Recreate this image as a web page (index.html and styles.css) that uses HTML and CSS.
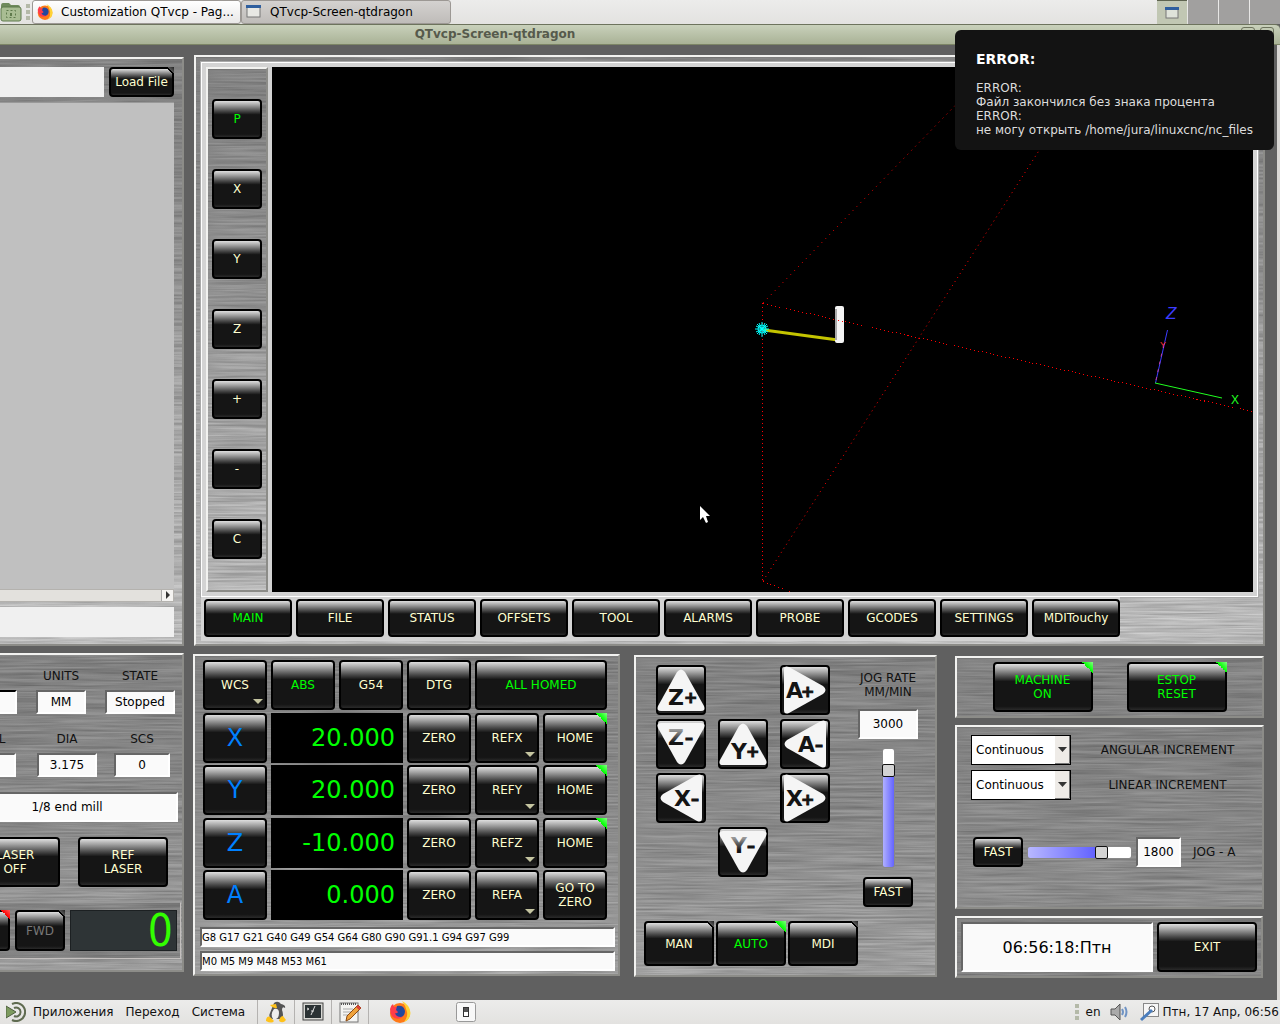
FILE: index.html
```html
<!DOCTYPE html>
<html lang="ru">
<head>
    <meta charset="UTF-8">
    <meta name="viewport" content="width=device-width, initial-scale=1.0">
    <title>QTvcp-Screen-qtdragon</title>
    <link rel="stylesheet" href="styles.css">
</head>
<body>
    <header class="desk-bar top-bar">
        <svg class="folder" width="22" height="24" viewBox="0 0 22 24">
            <path d="M1 6q0-3 2-3h6l2 2h7q2 0 2 2v2H1z" fill="#6f8a5c"/>
            <rect x="1" y="7" width="20" height="14" rx="2" fill="#a9bd93" stroke="#5f7a4c"/>
            <rect x="6.500" y="10.500" width="9" height="7" fill="none" stroke="#5f7a4c" stroke-dasharray="2 2"/>
            <rect x="10" y="13" width="2" height="3" fill="#5f7a4c"/>
        </svg>
        <span class="handle"></span>
        <button class="task task-light">
            <svg width="16" height="16" viewBox="0 0 22 22"><use href="#firefox"/></svg>
            Customization QTvcp - Pag...
        </button>
        <button class="task task-active">
            <svg width="16" height="14" viewBox="0 0 16 14">
                <rect x="1" y="1" width="13" height="11" fill="#e8e8e4" stroke="#777"/>
                <rect x="0" y="0" width="15" height="3" fill="#2f5f9e"/>
            </svg>
            QTvcp-Screen-qtdragon
        </button>
        <div class="pager">
            <span class="desk current">
                <svg width="14" height="12" viewBox="0 0 14 12">
                    <rect x="1" y="1" width="12" height="10" fill="#dfe3da" stroke="#777"/>
                    <rect x="0" y="0" width="14" height="3" fill="#2f5f9e"/>
                </svg>
            </span>
            <span class="desk"></span>
            <span class="desk"></span>
            <span class="desk"></span>
        </div>
    </header>

    <div class="title-bar">QTvcp-Screen-qtdragon
        <span class="win-buttons"><i></i><i></i></span>
    </div>

    <main class="window">
        <div class="row upper">
            <div class="clip">
                <section class="panel file-panel">
                    <div class="file-row">
                        <input type="text" class="flat" aria-label="File path">
                        <button class="btn load led">Load File</button>
                    </div>
                    <div class="file-list">
                        <div class="scroll"><button class="scroll-btn" aria-label="Scroll right"></button></div>
                    </div>
                    <input type="text" class="flat" aria-label="MDI line">
                </section>
            </div>

            <section class="panel view-panel">
                <div class="view-frame">
                    <div class="panel view-keys">
                        <button class="btn on">P</button>
                        <button class="btn">X</button>
                        <button class="btn">Y</button>
                        <button class="btn">Z</button>
                        <button class="btn">+</button>
                        <button class="btn">-</button>
                        <button class="btn">C</button>
                    </div>
                    <svg class="plot" viewBox="272 67 981 525" preserveAspectRatio="xMinYMin slice">
                        <!-- machine limits -->
                        <g class="limits">
                            <path d="M762.500 303V581"/>
                            <path d="M763 303.500L1252 411.500"/>
                            <path class="slope" d="M763 303L980 80" stroke-dasharray="1 4.600"/>
                            <path class="slope" d="M763 581L1058 121" stroke-dasharray="1 3.800"/>
                            <path d="M763 581.500L790 591.500"/>
                        </g>
                        <!-- tool path -->
                        <path d="M764 330L838 340" stroke="#c4c400" stroke-width="3"/>
                        <rect x="835" y="306" width="9" height="37" rx="2" fill="#f4f4f4"/>
                        <rect x="835" y="309" width="2" height="31" fill="#aaa"/>
                        <rect x="838" y="320" width="1" height="1" fill="#f00"/>
                        <rect x="842" y="321" width="1" height="1" fill="#f00"/>
                        <!-- origin -->
                        <g stroke="#00ffff" fill="none">
                            <path d="M762 322V337M755 329H769M757 324L767 334M767 324L757 334M759 323L765 335M765 323L759 335M756 326L768 332M768 326L756 332"/>
                            <circle cx="762" cy="329" r="4"/>
                        </g>
                        <!-- axes -->
                        <g fill="none">
                            <path d="M1155.500 383L1167.500 330" stroke="#3c3cff"/>
                            <path d="M1156 380L1162.500 350" stroke="#c040a0" stroke-dasharray="3 5"/>
                            <path d="M1155 383L1222 398" stroke="#20ff20"/>
                        </g>
                        <text x="1166" y="319" class="axis-z">Z</text>
                        <text x="1160" y="348" class="axis-y">Y</text>
                        <text x="1231" y="404" class="axis-x">X</text>
                        <path d="M700 506v14l3-3 3 6 2-1-2-6h4z" fill="#fff"/>
                    </svg>
                </div>
                <nav class="tabs">
                    <button class="btn on">MAIN</button>
                    <button class="btn">FILE</button>
                    <button class="btn">STATUS</button>
                    <button class="btn">OFFSETS</button>
                    <button class="btn">TOOL</button>
                    <button class="btn">ALARMS</button>
                    <button class="btn">PROBE</button>
                    <button class="btn">GCODES</button>
                    <button class="btn">SETTINGS</button>
                    <button class="btn">MDITouchy</button>
                </nav>
            </section>
        </div>

        <div class="row lower">
            <div class="clip">
                <section class="panel status-panel">
                    <div class="fields first">
                        <input type="text" class="field dark-top" aria-label="Gcode">
                        <label class="w-units">UNITS<input type="text" class="field" value="MM"></label>
                        <label class="w-state">STATE<input type="text" class="field" value="Stopped"></label>
                    </div>
                    <div class="fields second">
                        <label class="w-tool">TOOL<input type="text" class="field"></label>
                        <label class="w-dia">DIA<input type="text" class="field" value="3.175"></label>
                        <label class="w-scs">SCS<input type="text" class="field" value="0"></label>
                    </div>
                    <input type="text" class="field tool-name" value="1/8 end mill" aria-label="Tool">
                    <div class="laser">
                        <button class="btn">LASER<br>OFF</button>
                        <button class="btn">REF<br>LASER</button>
                    </div>
                    <div class="panel spindle">
                        <button class="btn led led-red" aria-label="Stop"></button>
                        <button class="btn led dim">FWD</button>
                        <output class="lcd">0</output>
                    </div>
                </section>
            </div>

            <section class="panel dro-panel">
                <div class="dro">
                    <button class="btn menu">WCS</button>
                    <button class="btn on">ABS</button>
                    <button class="btn">G54</button>
                    <button class="btn">DTG</button>
                    <button class="btn on wide">ALL HOMED</button>

                    <button class="btn axis">X</button>
                    <output class="readout">20.000</output>
                    <button class="btn">ZERO</button>
                    <button class="btn menu">REFX</button>
                    <button class="btn led led-green">HOME</button>

                    <button class="btn axis">Y</button>
                    <output class="readout">20.000</output>
                    <button class="btn">ZERO</button>
                    <button class="btn menu">REFY</button>
                    <button class="btn led led-green">HOME</button>

                    <button class="btn axis">Z</button>
                    <output class="readout">-10.000</output>
                    <button class="btn">ZERO</button>
                    <button class="btn menu">REFZ</button>
                    <button class="btn led led-green">HOME</button>

                    <button class="btn axis">A</button>
                    <output class="readout">0.000</output>
                    <button class="btn">ZERO</button>
                    <button class="btn menu">REFA</button>
                    <button class="btn">GO TO<br>ZERO</button>
                </div>
                <input type="text" class="field codes" value="G8 G17 G21 G40 G49 G54 G64 G80 G90 G91.1 G94 G97 G99" aria-label="G codes">
                <input type="text" class="field codes" value="M0 M5 M9 M48 M53 M61" aria-label="M codes">
            </section>

            <section class="panel jog-panel">
                <div class="jog-top">
                    <div class="jog-pad">
                        <button class="btn c1 r1"><svg viewBox="0 0 50 50"><use href="#up"/><text x="12" y="40">Z</text><text x="28" y="38" class="sign">+</text></svg></button>
                        <button class="btn c3 r1"><svg viewBox="0 0 50 50"><use href="#right"/><text x="6" y="33">A</text><text x="21" y="32" class="sign">+</text></svg></button>
                        <button class="btn c1 r2"><svg viewBox="0 0 50 50"><use href="#down"/><text x="12" y="26" class="fade">Z</text><text x="29" y="24" class="sign">–</text></svg></button>
                        <button class="btn c2 r2"><svg viewBox="0 0 50 50"><use href="#up"/><text x="13" y="40">Y</text><text x="28" y="38" class="sign">+</text></svg></button>
                        <button class="btn c3 r2"><svg viewBox="0 0 50 50"><use href="#left"/><text x="18" y="33">A</text><text x="35" y="31" class="sign">–</text></svg></button>
                        <button class="btn c1 r3"><svg viewBox="0 0 50 50"><use href="#left"/><text x="18" y="33">X</text><text x="35" y="31" class="sign">–</text></svg></button>
                        <button class="btn c3 r3"><svg viewBox="0 0 50 50"><use href="#right"/><text x="6" y="33">X</text><text x="21" y="32" class="sign">+</text></svg></button>
                        <button class="btn c2 r4"><svg viewBox="0 0 50 50"><use href="#down"/><text x="13" y="26" class="fade">Y</text><text x="29" y="24" class="sign">–</text></svg></button>
                    </div>
                    <div class="jog-rate">
                        <label for="jogRate">JOG RATE<br>MM/MIN</label>
                        <input type="text" id="jogRate" class="field" value="3000">
                        <input type="range" class="vertical" value="86" aria-label="Jog rate">
                        <button class="btn">FAST</button>
                    </div>
                </div>
                <div class="modes">
                    <button class="btn led">MAN</button>
                    <button class="btn led led-green on">AUTO</button>
                    <button class="btn led">MDI</button>
                </div>
            </section>

            <div class="right-column">
                <section class="panel power">
                    <button class="btn led led-green on">MACHINE<br>ON</button>
                    <button class="btn led led-green on">ESTOP<br>RESET</button>
                </section>
                <section class="panel increments">
                    <div class="inc">
                        <select id="angular"><option>Continuous</option></select>
                        <label for="angular">ANGULAR INCREMENT</label>
                    </div>
                    <div class="inc">
                        <select id="linear"><option>Continuous</option></select>
                        <label for="linear">LINEAR INCREMENT</label>
                    </div>
                    <div class="jog-a">
                        <button class="btn">FAST</button>
                        <input type="range" class="horizontal" value="74" aria-label="Jog A rate">
                        <input type="text" id="jogA" class="field" value="1800">
                        <label for="jogA">JOG - A</label>
                    </div>
                </section>
                <section class="panel exit-panel">
                    <input type="text" class="field clock" value="06:56:18:Птн" aria-label="Clock">
                    <button class="btn">EXIT</button>
                </section>
            </div>
        </div>
    </main>

    <footer class="desk-bar bottom-bar">
        <svg class="mate" width="20" height="20" viewBox="0 0 20 20" fill="none">
            <path d="M6 2A9 9 0 1 1 6 18" stroke="#5f6b50" stroke-width="2"/>
            <path d="M8 6a4.500 4.500 0 1 1 0 8" stroke="#5f6b50" stroke-width="2"/>
            <path d="M0 4l10 6-10 6z" fill="#7d9b5f" stroke="#4f6040"/>
        </svg>
        <a href="#">Приложения</a>
        <a href="#">Переход</a>
        <a href="#">Система</a>
        <div class="launchers">
            <span>
                <svg width="22" height="22" viewBox="0 0 22 22">
                    <path d="M9 2q4-3 7 1 5 1 4 4-3-2-3 2 2 5 0 9H7q-4-2-2-6 2-5 4-10z" fill="#555"/>
                    <path d="M9 8q5-1 5 4 0 5-3 6H8q-3-5 1-10z" fill="#eee"/>
                    <path d="M5 4l6-1 1 4q-4 1-7-3zM1 19q1-5 4-3l4 4q-2 3-8 0zM14 20q1-5 4-5l3 4q-3 4-7 1z" fill="#ffc21a"/>
                </svg>
            </span>
            <span>
                <svg width="22" height="20" viewBox="0 0 22 20">
                    <rect x="1" y="1" width="20" height="17" fill="#d8d8d4" stroke="#444"/>
                    <rect x="3" y="3" width="16" height="13" fill="#2b3234"/>
                    <path d="M5 6l2 1-2 1M9 9h3M13 4l-4 9" stroke="#ddd" fill="none"/>
                </svg>
            </span>
            <span>
                <svg width="22" height="22" viewBox="0 0 22 22">
                    <rect x="1" y="2" width="18" height="19" fill="#f4f4f2" stroke="#777"/>
                    <path d="M2 3h16" stroke="#555" stroke-width="2" stroke-dasharray="1 1"/>
                    <path d="M4 8h10M4 11h8M4 14h6" stroke="#aaa"/>
                    <path d="M19 4l3 3L11 18l-4 2 1-5z" fill="#f0a33c" stroke="#8a4a14"/>
                    <path d="M19 4l3 3-2 2-3-3z" fill="#d9403a"/>
                </svg>
            </span>
        </div>
        <svg class="ff" width="22" height="22" viewBox="0 0 22 22">
            <g id="firefox">
                <circle cx="11" cy="12" r="10" fill="#ff7a18"/>
                <path d="M13 0q8 4 8.500 12-.5 7-6.500 9 4-5 3-10-1-6-5-11z" fill="#ffd335"/>
                <path d="M1 8Q2 4 4 3l1 3q6-1 8 3 4 5-1 8-6 2-9-2-2-3-2-7z" fill="#ff3d4a"/>
                <path d="M8 5q7-1 8 5 0 5-4 6-5 0-6-4 2 1 3-1L7 9z" fill="#24489e"/>
            </g>
        </svg>
        <svg class="toggle" width="20" height="20" viewBox="0 0 20 20">
            <rect x=".5" y=".5" width="19" height="19" rx="2" fill="#f8f8f8" stroke="#999"/>
            <rect x="7.500" y="5.500" width="5" height="9" fill="#fff" stroke="#333"/>
            <rect x="8" y="6" width="4" height="4" fill="#555"/>
        </svg>
        <div class="tray">
            <span class="handle"></span>
            <span class="lang">en</span>
            <svg width="20" height="20" viewBox="0 0 20 20" fill="none">
                <path d="M1 7h4l5-5v16l-5-5H1z" fill="#aaa" stroke="#555"/>
                <path d="M12 7q2 3 0 6M15 5q3 5 0 10" stroke="#6f93c4" stroke-width="2"/>
            </svg>
            <svg class="tray-note" width="19" height="20" viewBox="0 0 19 20">
                <rect x="3.500" y="1.500" width="15" height="13" fill="#f6f6f6" stroke="#888"/>
                <circle cx="12" cy="7" r="3" fill="#fff" stroke="#555"/>
                <path d="M12 8L1 18" stroke="#4a7dbd" stroke-width="3"/>
            </svg>
            <time>Птн, 17 Апр, 06:56</time>
        </div>
    </footer>

    <aside class="notice" role="alert">
        <h2>ERROR:</h2>
        <p>ERROR:<br>Файл закончился без знака процента<br>ERROR:<br>не могу открыть /home/jura/linuxcnc/nc_files</p>
    </aside>

    <!-- shared shapes for the jog arrows -->
    <svg class="defs" aria-hidden="true">
        <defs>
            <linearGradient id="fade" x1="0" y1="0" x2="0" y2="1">
                <stop offset=".2" stop-color="#999"/>
                <stop offset=".7" stop-color="#141414"/>
            </linearGradient>
            <path id="up" d="M21 7q4-5 8 0l19 34q2 5-3 5H5q-5 0-3-5z" fill="#f5f5f5"/>
            <path id="down" d="M21 43q4 5 8 0L48 9q2-5-3-5H5Q0 4 2 9z" fill="#f5f5f5"/>
            <path id="right" d="M43 21q5 4 0 8L9 48q-5 2-5-3V5q0-5 5-3z" fill="#f5f5f5"/>
            <path id="left" d="M7 21q-5 4 0 8l34 19q5 2 5-3V5q0-5-5-3z" fill="#f5f5f5"/>
        </defs>
    </svg>
</body>
</html>
```

FILE: styles.css
```css
* {
    box-sizing: border-box;
}

body {
    margin: 0;
    min-height: 100vh;
    display: flex;
    flex-direction: column;
    overflow: hidden;
    background-color: #606060;
    font-family: "DejaVu Sans", sans-serif;
    font-size: 12px;
    line-height: 14px;
    color: #111;
}

button,
input,
select {
    font: inherit;
    margin: 0;
}

.defs {
    position: absolute;
    width: 0;
    height: 0;
}

/* Desktop bars */
.desk-bar {
    display: flex;
    align-items: center;
    height: 24px;
    background: linear-gradient(#ececeb, #e3e2e0);
}

.handle {
    width: 4px;
    height: 16px;
    margin: 0 2px 0 4px;
    background: repeating-linear-gradient(#b4b9a8 0, #b4b9a8 4px, transparent 4px, transparent 6px);
}

.task {
    display: flex;
    align-items: center;
    gap: 8px;
    height: 24px;
    width: 209px;
    padding: 0 4px;
    border: 1px solid #9c9894;
    border-radius: 3px;
    background: linear-gradient(#fff, #e9e8e7);
    white-space: nowrap;
}

.task-active {
    width: 210px;
    background: linear-gradient(#d4d2d0, #bfbcb9);
}

.pager {
    display: flex;
    gap: 1px;
    height: 24px;
    margin-left: auto;
}

.desk {
    width: 30px;
    background-color: #a1a09f;
}

.desk.current {
    display: flex;
    align-items: center;
    justify-content: center;
    border-top: 1px solid #5e6450;
    background-color: #c1c7b3;
}

.title-bar {
    position: relative;
    height: 21px;
    padding-right: 290px;
    border-top: 1px solid #6d735d;
    border-bottom: 1px solid #7c8566;
    border-top-right-radius: 5px;
    background: linear-gradient(#c9d1bb, #a9b296);
    color: #565a4c;
    font-weight: bold;
    line-height: 19px;
    text-align: center;
}

.win-buttons {
    position: absolute;
    top: 2px;
    right: 6px;
    display: flex;
    gap: 5px;
}

.win-buttons i {
    width: 14px;
    height: 14px;
    border: 1px solid #6d735d;
    border-radius: 3px;
}

/* Window */
.window {
    flex: 1;
    display: flex;
    flex-direction: column;
    gap: 7px;
    padding: 10px 12px 22px 0;
    background-color: #606060;
    border-right: 3px solid #d9d7d4;
}

.row {
    display: flex;
}

.upper {
    flex: 1;
    gap: 10px;
}

.lower {
    align-items: flex-start;
    padding-right: 1px;
}

.clip {
    display: flex;
    flex: 0 0 184px;
    justify-content: flex-end;
    overflow: hidden;
}

.panel {
    border: 2px solid;
    border-color: #f2f2f0 #8c8c88 #8c8c88 #f2f2f0;
    background-image:
        url("data:image/svg+xml,%3Csvg xmlns='http://www.w3.org/2000/svg' width='512' height='600'%3E%3Cfilter id='n' x='0' y='0' width='100%25' height='100%25'%3E%3CfeTurbulence type='fractalNoise' baseFrequency='.012 .5' numOctaves='3' seed='4' stitchTiles='stitch'/%3E%3CfeColorMatrix values='0 0 0 0 0 0 0 0 0 0 0 0 0 0 0 .4 0 0 0 -.1'/%3E%3C/filter%3E%3Crect width='512' height='600' filter='url(%23n)'/%3E%3C/svg%3E"),
        linear-gradient(#8f8f8f, #9b9b9b 180px, #b0b0b0 320px, #d0d0d0 590px);
}

/* Buttons */
.btn {
    position: relative;
    padding: 0;
    border: 2px solid #000;
    border-radius: 4px;
    background: linear-gradient(#dedede, #a0a0a0 12%, #484848 28%, #151515 38%, #151515 92%, #2a2a2a);
    color: #ffffd0;
    text-align: center;
    cursor: pointer;
}

.btn.on {
    color: #00ff00;
}

.btn.dim {
    color: #777;
}

.btn.axis {
    color: #0080ff;
    font-size: 24px;
}

.menu::after {
    content: "";
    position: absolute;
    right: 2px;
    bottom: 4px;
    border: 5px solid transparent;
    border-top-color: #c4c4a0;
    border-bottom: 0;
}

.led::before {
    content: "";
    position: absolute;
    top: -2px;
    right: -2px;
    width: 8px;
    height: 8px;
    background: linear-gradient(to top right, transparent 48%, #000 50%, #000 60%, #555 62%, #222);
}

.led-green::before {
    width: 11px;
    height: 11px;
    background: linear-gradient(to top right, transparent 50%, #00ff00 50%, #80ff80);
}

.led-red::before {
    width: 9px;
    height: 9px;
    background: linear-gradient(to top right, transparent 50%, #ff0000 50%, #ff6060);
}

/* Text boxes */
.field {
    height: 24px;
    min-width: 0;
    padding: 0;
    border: 2px solid;
    border-color: #666 #fff #fff #666;
    border-radius: 0;
    background-color: #fafafa;
    color: #000;
    text-align: center;
}

.flat {
    display: block;
    width: 100%;
    height: 30px;
    border: 0;
    background-color: #f0f0f0;
}

/* File panel */
.file-panel {
    flex: 0 0 300px;
    display: flex;
    flex-direction: column;
    gap: 5px;
    margin-top: 2px;
    padding: 8px 8px 7px;
}

.file-row {
    display: flex;
    gap: 5px;
}

.load {
    flex: 0 0 65px;
}

.file-list {
    flex: 1;
    display: flex;
    align-items: flex-end;
    border-top: 1px solid #999;
    background-color: #c0c0c0;
}

.scroll {
    flex: 1;
    height: 13px;
    border: 1px solid #b4b2ae;
    background-color: #e3e1dd;
}

.scroll-btn {
    position: relative;
    display: block;
    width: 12px;
    height: 11px;
    margin-left: auto;
    padding: 0;
    border: 0;
    border-left: 1px solid #aaa;
    background-color: #f4f3f1;
}

.scroll-btn::after {
    content: "";
    position: absolute;
    top: 1px;
    left: 4px;
    border: 4px solid transparent;
    border-left-color: #333;
    border-right: 0;
}

/* Plot panel */
.view-panel {
    flex: 1;
    display: flex;
    flex-direction: column;
    min-width: 0;
    padding: 5px 5px 3px;
}

.view-frame {
    flex: 1;
    display: flex;
    gap: 4px;
    padding: 4px;
    border: 1px solid #fff;
    outline: 1px solid #aaa;
    background-color: #d3d3d3;
}

.view-keys {
    flex: 0 0 62px;
    display: flex;
    flex-direction: column;
    align-items: center;
    gap: 30px;
    padding-top: 30px;
}

.view-keys .btn {
    width: 50px;
    height: 40px;
}

.plot {
    flex: 1;
    min-width: 0;
    height: 525px;
    background-color: #000;
}

.limits {
    fill: none;
    stroke: #ff0000;
    stroke-dasharray: 1 3;
    shape-rendering: crispEdges;
}

.slope {
    shape-rendering: auto;
}

.axis-z {
    fill: #3c3cff;
    font: italic 17px "Liberation Sans", sans-serif;
}

.axis-y {
    fill: #ff3030;
    font: 9px "Liberation Sans", sans-serif;
}

.axis-x {
    fill: #20ff20;
    font: 12px "Liberation Sans", sans-serif;
}

.tabs {
    display: flex;
    align-self: flex-start;
    gap: 4px;
    padding: 2px 0 4px 3px;
    background-color: #d3d3d3;
}

.tabs .btn {
    width: 88px;
    height: 38px;
}

/* Status panel */
.status-panel {
    flex: 0 0 300px;
    height: 319px;
    padding: 14px 0 0;
}

.fields {
    display: flex;
    align-items: flex-end;
    justify-content: flex-end;
    margin-bottom: 15px;
}

.fields label {
    display: flex;
    flex-direction: column;
    align-items: center;
    gap: 7px;
}

.fields .field {
    width: 100%;
}

.first {
    gap: 19px;
    margin-bottom: 18px;
    padding-right: 7px;
}

.first .dark-top {
    width: 60px;
    border-top-color: #000;
}

.w-units {
    width: 50px;
}

.w-state {
    width: 70px;
}

.second {
    gap: 17px;
    padding-right: 12px;
}

.w-tool {
    width: 54px;
    margin-right: 4px;
}

.w-dia {
    width: 60px;
}

.w-scs {
    width: 56px;
}

.tool-name {
    display: block;
    width: 222px;
    height: 30px;
    margin: 0 4px 15px auto;
}

.laser {
    display: flex;
    justify-content: flex-end;
    gap: 18px;
    margin: 0 14px 15px 0;
}

.laser .btn {
    width: 90px;
    height: 50px;
}

.spindle {
    display: flex;
    justify-content: flex-end;
    gap: 5px;
    margin-right: 1px;
    padding: 7px 3px 7px;
    border-width: 1px;
    border-color: #999 #c4c0be #c4c0be #999;
}

.spindle .btn {
    width: 50px;
    height: 41px;
}

.lcd {
    width: 107px;
    height: 41px;
    padding-right: 3px;
    border: 1px solid #1c2022;
    background-color: #2e3436;
    color: #33ff00;
    font: 44px "Liberation Sans Narrow", "DejaVu Sans Condensed", sans-serif;
    line-height: 40px;
    text-align: right;
}

/* Position readouts */
.dro-panel {
    flex: 0 0 427px;
    margin: 1px 14px 0 9px;
    padding: 4px 3px 3px 5px;
}

.dro {
    display: grid;
    grid-template-columns: repeat(6, 64px);
    grid-auto-rows: 50px;
    align-content: space-between;
    column-gap: 4px;
    height: 260px;
    margin: 0 0 7px 3px;
}

.wide,
.readout {
    grid-column: span 2;
}

.readout {
    padding-right: 8px;
    background-color: #000;
    color: #00ff00;
    font-size: 24px;
    line-height: 50px;
    text-align: right;
}

.codes {
    display: block;
    width: 100%;
    height: 20px;
    font-size: 10px;
    text-align: left;
}

.codes + .codes {
    margin-top: 4px;
}

/* Jog panel */
.jog-panel {
    flex: 0 0 303px;
    margin-top: 2px;
    padding: 8px 17px 9px 8px;
}

.jog-top {
    display: flex;
    justify-content: space-between;
    height: 256px;
    padding-left: 12px;
}

.jog-pad {
    display: grid;
    grid-template-columns: repeat(3, 50px);
    grid-auto-rows: 50px;
    gap: 4px 12px;
}

.jog-pad svg {
    display: block;
    width: 50px;
    height: 50px;
    margin: -2px;
}

.jog-pad text {
    fill: #141414;
    font-size: 22px;
    font-weight: bold;
}

.jog-pad .sign {
    font-size: 16px;
    stroke: #141414;
}

.jog-pad .fade {
    fill: url(#fade);
}

.c1 { grid-column: 1; }
.c2 { grid-column: 2; }
.c3 { grid-column: 3; }
.r1 { grid-row: 1; }
.r2 { grid-row: 2; }
.r3 { grid-row: 3; }
.r4 { grid-row: 4; }

.jog-rate {
    display: flex;
    flex-direction: column;
    align-items: center;
    width: 60px;
    padding-top: 6px;
    text-align: center;
}

.jog-rate .field {
    width: 60px;
    height: 30px;
    margin: 10px 0 9px;
}

.jog-rate .btn {
    width: 50px;
    height: 30px;
    margin-top: 9px;
}

input[type="range"] {
    appearance: none;
    -webkit-appearance: none;
    border: 1px solid #888;
    border-radius: 3px;
}

input[type="range"]::-webkit-slider-thumb {
    -webkit-appearance: none;
    width: 13px;
    height: 13px;
    border: 1px solid #111;
    border-radius: 2px;
    background-color: #d3d3d3;
}

.vertical {
    width: 13px;
    height: 120px;
    writing-mode: vertical-lr;
    direction: rtl;
    background: linear-gradient(#fff 20%, transparent 20%), linear-gradient(to right, #b0b0ff, #6464ff);
}

.horizontal {
    width: 105px;
    height: 13px;
    background: linear-gradient(to right, transparent 70%, #fff 70%), linear-gradient(to right, #b8b8ff, #5c5cff 70%);
}

.modes {
    display: flex;
    gap: 2px;
}

.modes .btn {
    width: 70px;
    height: 45px;
}

/* Right column */
.right-column {
    display: flex;
    flex-direction: column;
    flex: 0 0 309px;
    gap: 7px;
    min-width: 0;
    margin: 3px 0 0 auto;
}

.power {
    display: flex;
    justify-content: center;
    gap: 34px;
    padding: 4px 0;
}

.power .btn,
.exit-panel .btn {
    width: 100px;
    height: 50px;
}

.increments {
    height: 184px;
    padding: 8px 14px;
}

.inc {
    display: flex;
    align-items: center;
    margin-bottom: 5px;
}

.inc select {
    width: 100px;
    height: 30px;
    padding: 0 4px;
    border: 1px solid #000;
    border-radius: 0;
    appearance: none;
    background:
        url("data:image/svg+xml,%3Csvg xmlns='http://www.w3.org/2000/svg' width='15' height='28'%3E%3Cpath d='M0 0h15v28H0z' fill='%23eeebe7'/%3E%3Cpath d='M0 27.500h14.500V0' fill='none' stroke='%23777'/%3E%3Cpath d='M3 11h9l-4.500 5z' fill='%23333'/%3E%3C/svg%3E") right center no-repeat,
        #fff;
    color: #000;
}

.inc label {
    flex: 1;
    padding-left: 16px;
    text-align: center;
}

.jog-a {
    display: flex;
    align-items: center;
    gap: 4px;
    margin: 37px 0 0 2px;
}

.jog-a .btn {
    width: 50px;
    height: 30px;
}

.jog-a .field {
    width: 45px;
    height: 30px;
}

.jog-a label {
    padding-left: 8px;
}

.exit-panel {
    display: flex;
    gap: 4px;
    margin-right: 1px;
    padding: 4px;
}

.exit-panel .clock {
    flex: 1;
    width: 0;
    height: 50px;
    font-size: 16px;
}

/* Bottom bar */
.bottom-bar a {
    margin-right: 12px;
    color: #111;
    text-decoration: none;
}

.mate {
    margin: 0 7px 0 6px;
}

.launchers {
    display: flex;
    height: 24px;
    border-right: 1px solid #b4b2b0;
}

.launchers span {
    display: flex;
    align-items: center;
    justify-content: center;
    width: 37px;
    border-left: 1px solid #b4b2b0;
}

.ff {
    margin-left: 20px;
}

.toggle {
    margin-left: 45px;
}

.tray {
    display: flex;
    align-items: center;
    margin-left: auto;
    padding-right: 1px;
}

.lang {
    margin: 0 9px 0 5px;
}

.tray-note {
    margin: 0 4px 0 10px;
}

/* Notification */
.notice {
    position: absolute;
    top: 30px;
    right: 6px;
    width: 319px;
    height: 120px;
    padding: 21px 0 0 21px;
    border-radius: 6px;
    background-color: #131313;
    color: #ddd;
    white-space: nowrap;
}

.notice h2 {
    margin: 0 0 14px;
    color: #fff;
    font-size: 14px;
    line-height: 16px;
}

.notice p {
    margin: 0;
}
```
